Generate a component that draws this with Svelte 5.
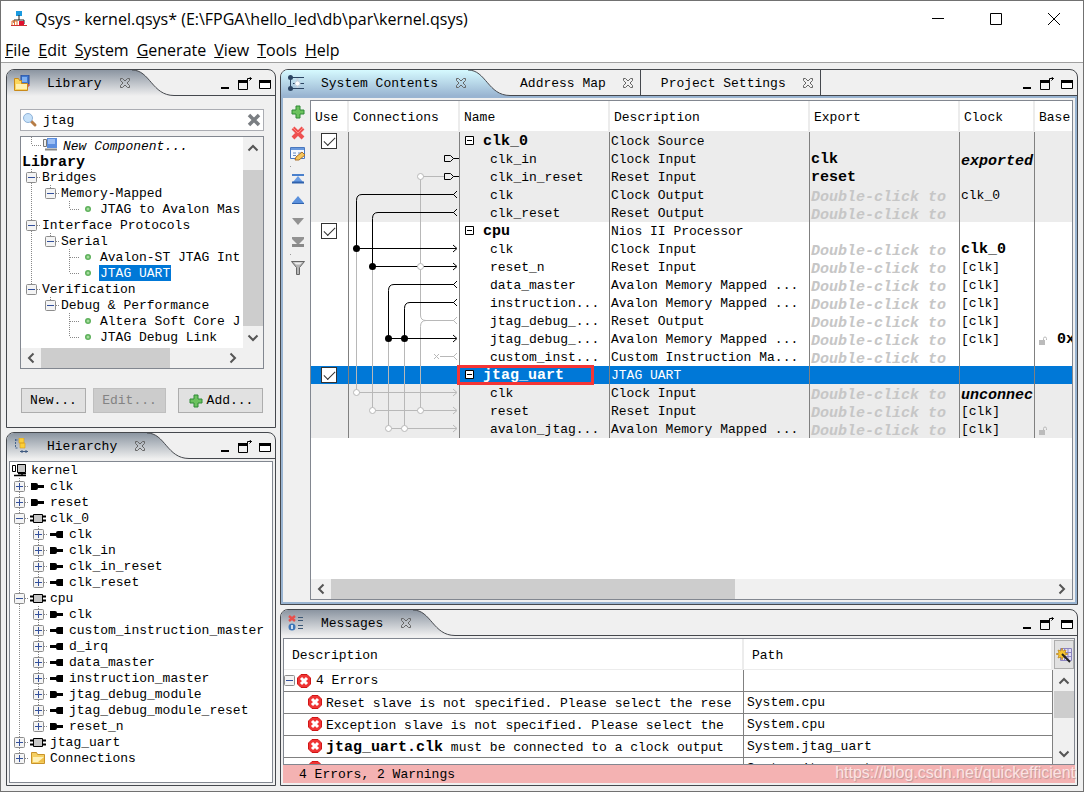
<script lang="ts">
  type TreeNode = {
    label: string;
    guides?: string;
    box?: "+" | "-";
    last?: boolean;
    icon?: string;
    kind?: "root" | "italic";
    selected?: boolean;
  };

  type Row = {
    name: string;
    desc: string;
    parent?: boolean;
    exp?: string;
    clock?: string;
    clockStyle?: string;
    lock?: boolean;
    base?: string;
    tone?: string;
  };

  const menus = ["File", "Edit", "System", "Generate", "View", "Tools", "Help"];

  // guides: "|" vertical, "T" branch, "L" last branch, " " empty
  const library: TreeNode[] = [
    { label: "New Component...", guides: "L", icon: "component", kind: "italic" },
    { label: "Library", kind: "root" },
    { label: "Bridges", box: "-" },
    { label: "Memory-Mapped", guides: "|", box: "-", last: true },
    { label: "JTAG to Avalon Mas", guides: "| L", icon: "dot" },
    { label: "Interface Protocols", box: "-" },
    { label: "Serial", guides: "|", box: "-", last: true },
    { label: "Avalon-ST JTAG Int", guides: "| T", icon: "dot" },
    { label: "JTAG UART", guides: "| L", icon: "dot", selected: true },
    { label: "Verification", box: "-", last: true },
    { label: "Debug & Performance", guides: " ", box: "-", last: true },
    { label: "Altera Soft Core J", guides: "  T", icon: "dot" },
    { label: "JTAG Debug Link", guides: "  L", icon: "dot" }
  ];

  const hierarchy: TreeNode[] = [
    { label: "kernel", icon: "system" },
    { label: "clk", box: "+", icon: "in" },
    { label: "reset", box: "+", icon: "in" },
    { label: "clk_0", box: "-", icon: "chip" },
    { label: "clk", guides: "|", box: "+", icon: "out" },
    { label: "clk_in", guides: "|", box: "+", icon: "in" },
    { label: "clk_in_reset", guides: "|", box: "+", icon: "in" },
    { label: "clk_reset", guides: "|", box: "+", icon: "out", last: true },
    { label: "cpu", box: "-", icon: "chip" },
    { label: "clk", guides: "|", box: "+", icon: "in" },
    { label: "custom_instruction_master", guides: "|", box: "+", icon: "out" },
    { label: "d_irq", guides: "|", box: "+", icon: "out" },
    { label: "data_master", guides: "|", box: "+", icon: "out" },
    { label: "instruction_master", guides: "|", box: "+", icon: "out" },
    { label: "jtag_debug_module", guides: "|", box: "+", icon: "in" },
    { label: "jtag_debug_module_reset", guides: "|", box: "+", icon: "out" },
    { label: "reset_n", guides: "|", box: "+", icon: "in", last: true },
    { label: "jtag_uart", box: "+", icon: "chip" },
    { label: "Connections", box: "+", icon: "folder", last: true }
  ];

  const hint = "Double-click to";

  const rows: Row[] = [
    { name: "clk_0", desc: "Clock Source", parent: true, tone: "shade" },
    { name: "clk_in", desc: "Clock Input", exp: "clk", clock: "exported", clockStyle: "strong slant", tone: "shade" },
    { name: "clk_in_reset", desc: "Reset Input", exp: "reset", tone: "shade" },
    { name: "clk", desc: "Clock Output", exp: hint, clock: "clk_0", tone: "shade" },
    { name: "clk_reset", desc: "Reset Output", exp: hint, tone: "shade" },
    { name: "cpu", desc: "Nios II Processor", parent: true },
    { name: "clk", desc: "Clock Input", exp: hint, clock: "clk_0", clockStyle: "strong" },
    { name: "reset_n", desc: "Reset Input", exp: hint, clock: "[clk]" },
    { name: "data_master", desc: "Avalon Memory Mapped ...", exp: hint, clock: "[clk]" },
    { name: "instruction...", desc: "Avalon Memory Mapped ...", exp: hint, clock: "[clk]" },
    { name: "jtag_debug_...", desc: "Reset Output", exp: hint, clock: "[clk]" },
    { name: "jtag_debug_...", desc: "Avalon Memory Mapped ...", exp: hint, clock: "[clk]", lock: true, base: "0x" },
    { name: "custom_inst...", desc: "Custom Instruction Ma...", exp: hint },
    { name: "jtag_uart", desc: "JTAG UART", parent: true, tone: "picked" },
    { name: "clk", desc: "Clock Input", exp: hint, clock: "unconnec", clockStyle: "strong slant", tone: "shade" },
    { name: "reset", desc: "Reset Input", exp: hint, clock: "[clk]", tone: "shade" },
    { name: "avalon_jtag...", desc: "Avalon Memory Mapped ...", exp: hint, clock: "[clk]", lock: true, tone: "shade" }
  ];

  const messages = [
    { subject: "", text: "Reset slave is not specified. Please select the rese", path: "System.cpu" },
    { subject: "", text: "Exception slave is not specified. Please select the", path: "System.cpu" },
    { subject: "jtag_uart.clk", text: " must be connected to a clock output", path: "System.jtag_uart" },
    { subject: "", text: "", path: "System.jtag_uart" }
  ];

  const tools = ["add", "remove", "edit", "sep", "top", "up", "down", "bottom", "sep", "filter"];

  let search = $state("jtag");
</script>

{#snippet icon(name: string)}
  <svg class="icon" viewBox="0 0 16 16" aria-hidden="true">
    {#if name === "app"}
      <path d="M5 0h6v5H5z" fill="#1b9ae0" />
      <path d="M8 4v5M3 12V9h10v4" fill="none" stroke="#222" />
      <path d="M1 14v-4h5v4M3.500 10v4" fill="none" stroke="#e8722a" />
      <path d="M8 10h5v4H8z" fill="#e01030" />
      <path d="M0 14.500h16" stroke="#c33" />
    {:else if name === "library"}
      <path d="M7 0h8v9H7z" fill="#3f78d0" stroke="#2c4f96" />
      <path d="M8 2h5v5H8z" fill="#7fb0f0" />
      <path d="M15 9v2h-3" stroke="#c33" fill="none" />
      <path d="M0.500 15.500v-12h4l1 2h2v3h6v7z" fill="#fbd65c" stroke="#c98a1a" />
      <path d="M2 9h11v5H2z" fill="#fff0b0" />
    {:else if name === "hier"}
      <path d="M1.500 1v9h3M1.500 2h3" fill="none" stroke="#46658c" stroke-dasharray="2 1" />
      <path d="M5 0h5v5H5zM6 5h5v5H6z" fill="#fbcf3a" stroke="#d99a1c" stroke-width=".6" />
      <path d="M6 13.500h8M8 12v3M12 12v3" stroke="#3f5a80" fill="none" />
    {:else if name === "contents"}
      <path d="M2.500 2v12M2 2.500h14M2 13.500h14M5 8.500h11" stroke="#2b4462" fill="none" />
      <path d="M9.500 3v10" stroke="#c5d2df" stroke-width="2" fill="none" />
      <circle cx="2.500" cy="2.500" r="2.500" fill="#2b4462" />
      <circle cx="2.500" cy="13.500" r="2.500" fill="#2b4462" />
      <circle cx="9.500" cy="8.500" r="2.500" fill="#fff" stroke="#c5d2df" />
    {:else if name === "messages"}
      <path d="M1 1l6 5M7 1l-6 5" stroke="#e8504c" stroke-width="2.500" />
      <circle cx="4" cy="12" r="3.500" fill="#3e77b8" />
      <path d="M4 10v4" stroke="#fff" stroke-width="1.500" />
      <path d="M10 2.500h5M10 5.500h5M10 10.500h5M10 13.500h5" stroke="#3c5876" />
    {:else if name === "search"}
      <path d="M9 9l4 4" stroke="#b67c45" stroke-width="3" stroke-linecap="round" />
      <circle cx="6" cy="6" r="4.500" fill="#c7e2fa" stroke="#8fb2d8" />
    {:else if name === "clear"}
      <path d="M3 3l10 10M13 3L3 13" stroke="#7a7e82" stroke-width="3.500" />
    {:else if name === "dot"}
      <circle cx="8" cy="8" r="3" fill="#5db05b" />
      <circle cx="8" cy="8" r="1.500" fill="#a5dc9d" />
    {:else if name === "component"}
      <path d="M1.500 2.500h3v7h-3z" fill="#eee" stroke="#777" />
      <path d="M5 1h10v10H5z" fill="#5c8ee0" />
      <path d="M6 2h7v5H6z" fill="#9cbff5" />
      <path d="M3 12.500h12" stroke="#888" stroke-width="2" />
    {:else if name === "system"}
      <path d="M1.500 3.500h3v6h-3z" fill="#fff" stroke="#000" />
      <path d="M6.500 2.500h8v8h-8z" fill="#c6c6c6" stroke="#000" />
      <path d="M11 10v3M3 13.500h12M7 11.500h8" stroke="#000" stroke-width="1.500" />
    {:else if name === "in"}
      <path d="M1 5h5q2 0 2 2h6v3H8q0 2-2 2H1z" fill="#000" />
    {:else if name === "out"}
      <path d="M14 5H9Q7 5 7 7H1v3h6q0 2 2 2h5z" fill="#000" />
    {:else if name === "chip"}
      <path d="M0 6.500h16M0 10.500h16" stroke="#000" stroke-width="2" />
      <path d="M3.500 4.500h9v8h-9z" fill="#c6c6c6" stroke="#000" />
    {:else if name === "folder"}
      <path d="M1.500 13.500v-11h5l1 2h7v9z" fill="#f5cf62" stroke="#c9932a" />
      <path d="M3 7h11v5H3z" fill="#fff1b8" />
      <path d="M8 12l6-5v5z" fill="#f0c04a" />
    {:else if name === "add"}
      <path d="M6 2h4v4h4v4h-4v4H6v-4H2V6h4z" fill="#6cc25f" stroke="#2f8a37" />
    {:else if name === "remove"}
      <path d="M3 3l10 10M13 3L3 13" stroke="#ee5151" stroke-width="4" />
      <path d="M3 3l5 5 5-5" stroke="#ff8a82" fill="none" />
    {:else if name === "edit"}
      <path d="M.500 1.500h14v11H.500z" fill="#f5f9ff" stroke="#4a78be" />
      <path d="M1 2h13v2H1z" fill="#6a9ade" />
      <path d="M3 7h3M3 9.500h3M8 7h5" stroke="#6a8cc0" />
      <path d="M5 14l1-3 6-5 3 3-6 5z" fill="#f7c65a" stroke="#a9702a" />
    {:else if name === "top"}
      <path d="M2 3h12v2H2z" fill="#4a80cc" />
      <path d="M8 5l5 6H3z" fill="#6a9de4" />
      <path d="M2 11.500h12" stroke="#2f62ad" stroke-width="2" />
    {:else if name === "up"}
      <path d="M8 4l6 7H2z" fill="#5a90dc" />
      <path d="M2 11.500h12" stroke="#2f62ad" />
    {:else if name === "down"}
      <path d="M2 5h12l-6 7z" fill="#929292" />
    {:else if name === "bottom"}
      <path d="M2 3h12v2l-5 5H7L2 5z" fill="#929292" />
      <path d="M2 10h12v3H2z" fill="#8a8a8a" />
    {:else if name === "filter"}
      <path d="M1.500 2.500h13l-5 6v7h-3v-7z" fill="#b5b5b5" stroke="#666" />
      <path d="M4 3.500h8l-2 2H6z" fill="#eee" />
    {:else if name === "error"}
      <path d="M5 1.500h6L14.500 5v6L11 14.500H5L1.500 11V5z" fill="#f03434" stroke="#d01616" />
      <path d="M5 5l6 6M11 5l-6 6" stroke="#fff" stroke-width="3" />
    {:else if name === "lock"}
      <path d="M3 8h6v5H3z" fill="#bbb" />
      <path d="M7.500 8V6.500q0-1.500 1.500-1.500t1.500 1.500V8" fill="none" stroke="#bbb" />
    {:else if name === "wizard"}
      <path d="M4.500 1.500h11v12h-11zM8.500 1.500v12M12 1.500v12M4.500 5.500h11M4.500 9.500h11" fill="#e3e0f8" stroke="#8b84bf" />
      <path d="M6 1l1 3 3-1-1 3 3 1-3 1 1 3-3-1-1 3-1-3-3 1 1-3-3-1 3-1-1-3 3 1z" fill="#f7c52c" stroke="#b9821a" stroke-width=".7" />
      <path d="M6 7l8 8" stroke="#222" stroke-width="2" />
    {/if}
  </svg>
{/snippet}

{#snippet chevron(dir: string)}
  <button class="arrow" aria-label="Scroll {dir}">
    <svg class={dir} viewBox="0 0 12 12" aria-hidden="true">
      <path d="M1.500 8.500L6 4l4.500 4.500" fill="none" stroke="#555" stroke-width="2" />
    </svg>
  </button>
{/snippet}

{#snippet closeMark()}
  <svg class="close" viewBox="0 0 12 12" aria-hidden="true">
    <path
      d="M1.500 1.500h2L6 4l2.500-2.500h2v2L8 6l2.500 2.500v2h-2L6 8l-2.500 2.500h-2v-2L4 6 1.500 3.500z"
      fill="none"
      stroke="#666"
    />
  </svg>
{/snippet}

{#snippet curve()}
  <svg class="curve" viewBox="0 0 42 26" aria-hidden="true">
    <path d="M0 0C18 0 20 25.500 42 25.500V0z" fill="#f0f0f0" />
    <path d="M0 0C18 0 20 25.500 42 25.500" fill="none" stroke="#45484d" />
  </svg>
{/snippet}

{#snippet panelButtons()}
  <div class="panel-buttons">
    <button aria-label="Minimize">
      <svg viewBox="0 0 16 14" aria-hidden="true"><path d="M4 11h8" stroke="#000" stroke-width="2" /></svg>
    </button>
    <button aria-label="Detach">
      <svg viewBox="0 0 16 14" aria-hidden="true">
        <path d="M1.500 4v8.500h9V5" fill="none" stroke="#000" />
        <path d="M1 4.500h10" stroke="#000" stroke-width="3" />
        <path d="M10.500 3.500v-2h4M12.500 0l2 1.500-2 2" fill="none" stroke="#000" />
      </svg>
    </button>
    <button aria-label="Maximize">
      <svg viewBox="0 0 16 14" aria-hidden="true">
        <path d="M2.500 3.500h11v8h-11z" fill="#fff" stroke="#000" />
        <path d="M2 4.500h12" stroke="#000" stroke-width="3" />
      </svg>
    </button>
  </div>
{/snippet}

{#snippet tree(nodes: TreeNode[])}
  <ul class="tree">
    {#each nodes as node}
      <li>
        {#each (node.guides ?? "").split("") as g}
          <svg class="guide" viewBox="0 0 19 16" aria-hidden="true">
            {#if g === "|" || g === "T"}<path d="M9.500 0V16" />{/if}
            {#if g === "L"}<path d="M9.500 0V8" />{/if}
            {#if g === "L" || g === "T"}<path d="M10 8.500H19" />{/if}
          </svg>
        {/each}
        {#if node.box}
          <svg class="guide" viewBox="0 0 19 16" aria-hidden="true">
            <path d={node.last ? "M9.500 0V8" : "M9.500 0V16"} />
            <path d="M15 8.500H19" />
            <rect x="4.500" y="3.500" width="10" height="10" rx="1" fill="#f4f4f4" stroke="#8d8d8d" />
            <path class="sign" d={node.box === "+" ? "M6 8.500h7M9.500 5v7" : "M6 8.500h7"} />
          </svg>
        {/if}
        {#if node.icon}<span class="node-icon">{@render icon(node.icon)}</span>{/if}
        <span class={["label", node.kind, node.selected && "selected"]}>{node.label}</span>
      </li>
    {/each}
  </ul>
{/snippet}

<div class="window">
  <header class="titlebar">
    <span class="app-icon">{@render icon("app")}</span>
    <h1>Qsys - kernel.qsys* (E:\FPGA\hello_led\db\par\kernel.qsys)</h1>
    <button aria-label="Minimize window">
      <svg viewBox="0 0 14 14" aria-hidden="true"><path d="M1 6.500h12" /></svg>
    </button>
    <button aria-label="Maximize window">
      <svg viewBox="0 0 14 14" aria-hidden="true"><path d="M1.500 1.500h11v11h-11z" /></svg>
    </button>
    <button aria-label="Close window">
      <svg viewBox="0 0 14 14" aria-hidden="true"><path d="M1 1l12 12M13 1L1 13" /></svg>
    </button>
  </header>

  <nav class="menubar">
    {#each menus as menu}
      <button><u>{menu[0]}</u>{menu.slice(1)}</button>
    {/each}
  </nav>

  <main class="workspace">
    <div class="column">
      <section class="panel">
        <div class="tabs">
          <button class="tab current">{@render icon("library")}<span>Library</span>{@render closeMark()}</button>
          {@render curve()}
          <div class="rest">{@render panelButtons()}</div>
        </div>
        <div class="library">
          <div class="search">
            {@render icon("search")}
            <input type="text" aria-label="Search library" bind:value={search} />
            <button aria-label="Clear search" onclick={() => (search = "")}>{@render icon("clear")}</button>
          </div>
          <div class="tree-box">
            <div class="tree-view">
              {@render tree(library)}
              <div class="vscroll">
                {@render chevron("up")}
                <div class="track"><div class="thumb full"></div></div>
                {@render chevron("down")}
              </div>
            </div>
            <div class="hscroll tree-h">
              {@render chevron("left")}
              <div class="track"><div class="thumb" style="width: 71%"></div></div>
              {@render chevron("right")}
            </div>
          </div>
          <div class="actions">
            <button class="new">New...</button>
            <button class="edit" disabled>Edit...</button>
            <button class="add">{@render icon("add")}Add...</button>
          </div>
        </div>
      </section>

      <section class="panel grow">
        <div class="tabs">
          <button class="tab current">{@render icon("hier")}<span>Hierarchy</span>{@render closeMark()}</button>
          {@render curve()}
          <div class="rest">{@render panelButtons()}</div>
        </div>
        <div class="hierarchy">{@render tree(hierarchy)}</div>
      </section>
    </div>

    <div class="column">
      <section class="panel grow active">
        <div class="tabs">
          <button class="tab current">{@render icon("contents")}<span>System Contents</span>{@render closeMark()}</button>
          {@render curve()}
          <button class="tab first"><span>Address Map</span>{@render closeMark()}</button>
          <button class="tab"><span>Project Settings</span>{@render closeMark()}</button>
          <div class="rest">{@render panelButtons()}</div>
        </div>
        <div class="contents">
          <div class="toolbar">
            {#each tools as tool}
              {#if tool === "sep"}
                <span class="sep"></span>
              {:else}
                <button aria-label={tool}>{@render icon(tool)}</button>
              {/if}
            {/each}
          </div>
          <div class="grid-box">
            <div class="grid-view">
              <table class="system">
                <colgroup>
                  <col class="c-use" /><col class="c-conn" /><col class="c-name" /><col class="c-desc" />
                  <col class="c-exp" /><col class="c-clock" /><col class="c-base" />
                </colgroup>
                <thead>
                  <tr>
                    <th>Use</th><th>Connections</th><th>Name</th><th>Description</th>
                    <th>Export</th><th>Clock</th><th>Base</th>
                  </tr>
                </thead>
                <tbody>
                  {#each rows as row, i}
                    <tr class={row.tone}>
                      <td class="use">
                        {#if row.parent}<input type="checkbox" checked aria-label="Use {row.name}" />{/if}
                      </td>
                      <td class="conn">
                        {#if i === 0}
                          <svg class="wires" viewBox="0 0 110 306" aria-hidden="true">
                            <g class="faint">
                              <path d="M7.500 116V260.500H107M23.500 134V278.500H107M39.500 206V296.500H107M55.500 206V296.500" />
                              <path d="M95 44.500H71.500V183q0 5.500 5.500 5.500H105M77 188.500q-5.500 0-5.500 6V278.500" />
                              <path d="M91 224.500h14M85 222l5 5M90 222l-5 5" />
                              {#each [188.5, 224.5] as y}
                                <path d="M108 {y - 3.5}l-3.500 3.500 3.500 3.500" />
                              {/each}
                              {#each [260.5, 278.5, 296.5] as y}
                                <path d="M104 {y - 3.5}l4 3.500-4 3.500" />
                              {/each}
                            </g>
                            <g class="solid">
                              <path d="M105 62.500H13q-5.500 0-5.500 6V116.500H107" />
                              <path d="M105 80.500H29q-5.500 0-5.500 6V134.500H107" />
                              <path d="M105 152.500H45q-5.500 0-5.500 6V206.500H107" />
                              <path d="M105 170.500H61q-5.500 0-5.500 6V206" />
                              {#each [62.5, 80.5, 152.5, 170.5] as y}
                                <path d="M108 {y - 3.5}l-3.500 3.500 3.500 3.500" />
                              {/each}
                              {#each [116.5, 134.5, 206.5] as y}
                                <path d="M104 {y - 3.5}l4 3.500-4 3.500" />
                              {/each}
                              {#each [26.5, 44.5] as y}
                                <path d="M95.500 {y - 3}h6l3 3-3 3h-6zM104.500 {y}h6" />
                              {/each}
                            </g>
                            {#each [[7.5, 116.5], [23.5, 134.5], [39.5, 206.5], [55.5, 206.5]] as [x, y]}
                              <circle cx={x} cy={y} r="3.500" />
                            {/each}
                            {#each [[71.5, 44.5], [71.5, 134.5], [7.5, 260.5], [23.5, 278.5], [71.5, 278.5], [39.5, 296.5], [55.5, 296.5]] as [x, y]}
                              <circle class="open" cx={x} cy={y} r="3" />
                            {/each}
                          </svg>
                        {/if}
                      </td>
                      <td class={["name", row.parent && "parent strong"]}>
                        {#if row.parent}
                          <svg class="fold" viewBox="0 0 9 9" aria-hidden="true">
                            <path d="M.500.500h8v8h-8z" fill="#fff" stroke="#000" />
                            <path d="M2 4.500h5" stroke="#000" />
                          </svg>
                        {/if}{row.name}
                        {#if row.tone === "picked"}<span class="mark"></span>{/if}
                      </td>
                      <td>{row.desc}</td>
                      <td class={["strong", row.exp === hint && "hint"]}>{row.exp ?? ""}</td>
                      <td class={row.clockStyle}>{row.clock ?? ""}</td>
                      <td class="base strong">
                        {#if row.lock}<div>{@render icon("lock")}{row.base ?? ""}</div>{/if}
                      </td>
                    </tr>
                  {/each}
                </tbody>
              </table>
            </div>
            <div class="hscroll">
              {@render chevron("left")}
              <div class="track"><div class="thumb" style="width: 56%"></div></div>
              {@render chevron("right")}
            </div>
          </div>
        </div>
      </section>

      <section class="panel">
        <div class="tabs">
          <button class="tab current">{@render icon("messages")}<span>Messages</span>{@render closeMark()}</button>
          {@render curve()}
          <div class="rest">{@render panelButtons()}</div>
        </div>
        <div class="messages">
          <div class="log">
            <div class="log-view">
              <table>
                <thead>
                  <tr><th>Description</th><th>Path</th></tr>
                </thead>
                <tbody>
                  <tr>
                    <td class="group">
                      <div>
                        <svg class="guide" viewBox="0 0 11 16" aria-hidden="true">
                          <rect x=".500" y="2.500" width="10" height="10" rx="1" fill="#f4f4f4" stroke="#8d8d8d" />
                          <path class="sign" d="M2 7.500h7" />
                        </svg>
                        {@render icon("error")}<span>4 Errors</span>
                      </div>
                    </td>
                    <td></td>
                  </tr>
                  {#each messages as msg}
                    <tr>
                      <td class="entry">
                        <div>{@render icon("error")}<span class="text"><b>{msg.subject}</b>{msg.text}</span></div>
                      </td>
                      <td>{msg.path}</td>
                    </tr>
                  {/each}
                </tbody>
              </table>
            </div>
            <div class="side">
              <button class="wizard" aria-label="Configure columns">{@render icon("wizard")}</button>
              <div class="vscroll">
                {@render chevron("up")}
                <div class="track"><div class="thumb short"></div></div>
                {@render chevron("down")}
              </div>
            </div>
          </div>
          <footer class="status">
            <span>4 Errors, 2 Warnings</span>
            <span class="credit">https://blog.csdn.net/quickefficient</span>
          </footer>
        </div>
      </section>
    </div>
  </main>
</div>

<style>
  :global(body) {
    background: #f0f0f0;
  }

  .window,
  .window * {
    box-sizing: border-box;
  }

  .window {
    display: flex;
    flex-direction: column;
    min-height: 100vh;
    border: 1px solid #717171;
    background: #f0f0f0;
    color: #000;
    font-family: "Liberation Mono", monospace;
    font-size: 13px;
    line-height: 16px;
  }

  button {
    padding: 0;
    border: 0;
    background: none;
    color: inherit;
    font: inherit;
  }

  svg {
    display: block;
    flex: none;
  }

  .icon {
    width: 16px;
    height: 16px;
  }

  /* title bar and menu */
  .titlebar {
    display: flex;
    align-items: center;
    height: 36px;
    padding-left: 10px;
    background: #fff;
    font-family: "Open Sans", sans-serif;
  }

  .titlebar h1 {
    flex: 1;
    margin: 0 0 0 8px;
    font-size: 16px;
    font-weight: 400;
    white-space: nowrap;
    overflow: hidden;
    line-height: 24px;
  }

  .titlebar button {
    display: flex;
    justify-content: center;
    width: 58px;
  }

  .titlebar button svg {
    width: 14px;
    height: 14px;
    fill: none;
    stroke: #000;
  }

  .menubar {
    display: flex;
    gap: 8px;
    height: 26px;
    padding-left: 4px;
    border-bottom: 1px solid #a0a0a0;
    background: #fff;
    font-family: "Open Sans", sans-serif;
    font-size: 16px;
    line-height: 24px;
  }

  .workspace {
    flex: 1;
    display: grid;
    grid-template-columns: 270px minmax(0, 1fr);
    gap: 4px;
    padding: 6px 5px 5px;
  }

  .column {
    display: flex;
    flex-direction: column;
    gap: 4px;
    min-width: 0;
  }

  /* panels */
  .panel {
    display: flex;
    flex-direction: column;
    border: 1px solid #45484d;
    border-radius: 8px 8px 0 0;
    overflow: hidden;
  }

  .grow {
    flex: 1;
  }

  .tabs {
    display: flex;
    height: 26px;
  }

  .tab {
    display: flex;
    align-items: center;
    gap: 16px;
    padding: 0 6px 0 20px;
    border-right: 1px solid #45484d;
    border-bottom: 1px solid #45484d;
    white-space: nowrap;
  }

  .tab span {
    padding-top: 2px;
  }

  .tab.first {
    padding-left: 10px;
  }

  .tab.current {
    gap: 17px;
    padding: 0 1px 0 7px;
    border: 0;
  }

  .tab.current,
  .curve {
    background: linear-gradient(#8b95a1, #f0f0f0);
  }

  .active .tab.current,
  .active .curve {
    background: linear-gradient(#d6faff, #99b4d1);
  }

  .close {
    width: 12px;
    height: 12px;
  }

  .curve {
    width: 42px;
    height: 26px;
  }

  .rest {
    flex: 1;
    display: flex;
    justify-content: flex-end;
    align-items: center;
    border-bottom: 1px solid #45484d;
  }

  .panel-buttons {
    display: flex;
    gap: 4px;
    padding: 3px 2px 0 0;
  }

  .panel-buttons svg {
    width: 16px;
    height: 14px;
  }

  /* trees */
  .tree {
    flex: 1;
    min-width: 0;
    margin: 0;
    padding: 0;
    list-style: none;
    overflow: hidden;
    white-space: nowrap;
  }

  .tree li {
    display: flex;
    height: 16px;
  }

  .guide {
    width: 19px;
    height: 16px;
    fill: none;
    stroke: #888;
    stroke-dasharray: 1 1;
  }

  .guide rect {
    stroke-dasharray: none;
  }

  .guide .sign {
    stroke: #33509c;
    stroke-dasharray: none;
  }

  .node-icon {
    width: 20px;
    padding-left: 1px;
  }

  .label {
    padding: 0 1px;
    line-height: 18px;
  }

  .label.root {
    padding: 0;
    font-size: 15px;
    font-weight: 700;
    line-height: 20px;
  }

  .label.italic {
    padding-left: 2px;
    font-style: italic;
    line-height: 20px;
  }

  .label.selected {
    background: #0078d7;
    color: #fff;
  }

  .library {
    display: flex;
    flex-direction: column;
    padding: 13px 11px 14px 13px;
  }

  .search {
    display: flex;
    align-items: center;
    height: 22px;
    margin-bottom: 5px;
    padding: 0 1px;
    border: 1px solid #abadb3;
    background: #fff;
  }

  .search input {
    flex: 1;
    min-width: 0;
    padding: 2px 5px 0;
    border: 0;
    outline: 0;
    background: none;
    font: inherit;
  }

  .tree-box {
    border: 1px solid #828790;
    background: #fff;
  }

  .tree-view {
    display: flex;
    height: 211px;
    padding-left: 1px;
  }

  .hierarchy {
    flex: 1;
    margin: 2px;
    border: 1px solid #828790;
    background: #fff;
  }

  /* scroll bars */
  .vscroll {
    display: flex;
    flex-direction: column;
    width: 20px;
    background: #f0f0f0;
  }

  .hscroll {
    display: flex;
    height: 20px;
    background: #f0f0f0;
  }

  .tree-h {
    padding-right: 20px;
  }

  .track {
    flex: 1;
  }

  .thumb {
    height: 100%;
    background: #cdcdcd;
  }

  .thumb.full {
    margin-top: 12px;
    height: 156px;
  }

  .thumb.short {
    height: 27px;
  }

  .arrow {
    display: grid;
    place-content: center;
    width: 20px;
    height: 21px;
  }

  .hscroll .arrow {
    height: 20px;
  }

  .arrow svg {
    width: 12px;
    height: 12px;
  }

  .arrow .down {
    transform: rotate(180deg);
  }

  .arrow .left {
    transform: rotate(-90deg);
  }

  .arrow .right {
    transform: rotate(90deg);
  }

  .actions {
    display: flex;
    margin-top: 19px;
    padding: 0 1px;
  }

  .actions button {
    display: flex;
    align-items: center;
    justify-content: center;
    gap: 3px;
    height: 25px;
    border: 1px solid #adadad;
    background: #e1e1e1;
  }

  .actions .new {
    width: 65px;
  }

  .actions .edit {
    width: 73px;
    margin-left: 7px;
    border-color: #bfbfbf;
    background: #ccc;
    color: #838383;
  }

  .actions .add {
    width: 85px;
    margin-left: auto;
  }

  /* system contents */
  .contents {
    flex: 1;
    display: flex;
    padding: 2px 2px 2px 0;
    border: 2px solid #99b4d1;
  }

  .toolbar {
    display: flex;
    flex-direction: column;
    align-items: center;
    gap: 5px;
    width: 27px;
    padding: 4px 0 0 3px;
  }

  .toolbar .sep {
    width: 16px;
    height: 1px;
    margin: -1px 0;
    border-left: 1px solid #999;
  }

  .grid-box {
    flex: 1;
    display: flex;
    flex-direction: column;
    min-width: 0;
    border: 1px solid #828790;
    background: #fff;
  }

  .grid-view {
    flex: 1;
    overflow: hidden;
  }

  table {
    border-collapse: separate;
    border-spacing: 0;
    table-layout: fixed;
    width: 100%;
  }

  th {
    height: 31px;
    padding: 3px 0 0 4px;
    border-right: 2px solid #ececec;
    border-bottom: 1px solid #ececec;
    font-weight: 400;
    text-align: left;
    white-space: nowrap;
  }

  td {
    padding: 0 0 0 1px;
    border-right: 1px solid #808080;
    white-space: nowrap;
    overflow: hidden;
  }

  .system {
    width: 799px;
  }

  .c-use {
    width: 38px;
  }

  .c-conn {
    width: 111px;
  }

  .c-name,
  .c-exp {
    width: 150px;
  }

  .c-desc {
    width: 200px;
  }

  .c-clock,
  .c-base {
    width: 75px;
  }

  .system td {
    height: 18px;
    padding-top: 2px;
    line-height: 16px;
  }

  .shade td {
    background: #ececec;
  }

  .picked td {
    background: #0078d7;
    color: #fff;
  }

  .strong {
    font-size: 15px;
    font-weight: 700;
  }

  .slant,
  .hint {
    font-style: italic;
  }

  .hint {
    color: #c6c6c6;
  }

  .system .slant,
  .system .hint {
    padding-top: 6px;
    line-height: 12px;
  }

  .system .use {
    padding: 0;
  }

  .use input {
    display: grid;
    place-content: center;
    appearance: none;
    width: 16px;
    height: 16px;
    margin: 0 0 0 10px;
    border: 1px solid #333;
    background: #fff;
  }

  .use input:checked::after {
    content: "";
    width: 10px;
    height: 5px;
    margin-bottom: 3px;
    border: solid #333;
    border-width: 0 0 1px 1px;
    transform: rotate(-45deg);
  }

  .system .conn {
    position: relative;
    overflow: visible;
  }

  .wires {
    position: absolute;
    top: 0;
    left: 0;
    z-index: 1;
    width: 110px;
    height: 306px;
    fill: none;
  }

  .faint,
  .open {
    stroke: #b8b8b8;
  }

  .solid {
    stroke: #000;
  }

  .wires circle {
    fill: #000;
  }

  .wires .open {
    fill: #fff;
  }

  .system .name {
    position: relative;
    padding-left: 30px;
    overflow: visible;
  }

  .system .parent {
    padding-left: 5px;
  }

  .fold {
    display: inline-block;
    width: 9px;
    height: 9px;
    margin-right: 9px;
    vertical-align: 0;
  }

  .mark {
    position: absolute;
    top: -1px;
    left: -3px;
    z-index: 2;
    width: 137px;
    height: 20px;
    border: 3px solid #f53535;
  }

  .base div {
    display: flex;
    gap: 5px;
    height: 16px;
  }

  /* messages */
  .messages {
    padding: 2px;
  }

  .log {
    display: flex;
    height: 127px;
    border: 1px solid #828790;
    background: #fff;
  }

  .log-view {
    flex: 1;
    min-width: 0;
    overflow: hidden;
  }

  .log th {
    padding-left: 8px;
  }

  .log th:first-child {
    width: 460px;
  }

  .log td {
    height: 22px;
    padding: 0 0 0 3px;
    border-bottom: 1px solid #808080;
    line-height: 20px;
  }

  .log td div {
    display: flex;
    height: 21px;
  }

  .log .group {
    padding: 0;
  }

  .group div {
    align-items: center;
  }

  .group .guide {
    width: 11px;
  }

  .group .icon {
    margin: 0 4px 0 1px;
  }

  .log .entry {
    padding-left: 23px;
  }

  .entry .text {
    padding: 4px 0 0 3px;
    line-height: 16px;
  }

  .entry .icon {
    margin-top: 2px;
  }

  .entry b {
    font-size: 15px;
    line-height: 16px;
  }

  .side {
    display: flex;
    flex-direction: column;
    width: 21px;
    background: #f0f0f0;
  }

  .wizard {
    display: grid;
    place-content: center;
    height: 29px;
    margin: 1px 0 1px 1px;
    border: 1px solid #adadad;
    background: #e1e1e1;
  }

  .side .vscroll {
    flex: 1;
    margin-left: 1px;
  }

  .status {
    display: flex;
    justify-content: space-between;
    height: 18px;
    padding-left: 16px;
    background: #f4b2b2;
    line-height: 20px;
  }

  .credit {
    color: #fbe3e3;
    font-family: "Liberation Sans", sans-serif;
    font-size: 16px;
    line-height: 16px;
    text-shadow: 1px 1px 1px #b99;
  }
</style>
